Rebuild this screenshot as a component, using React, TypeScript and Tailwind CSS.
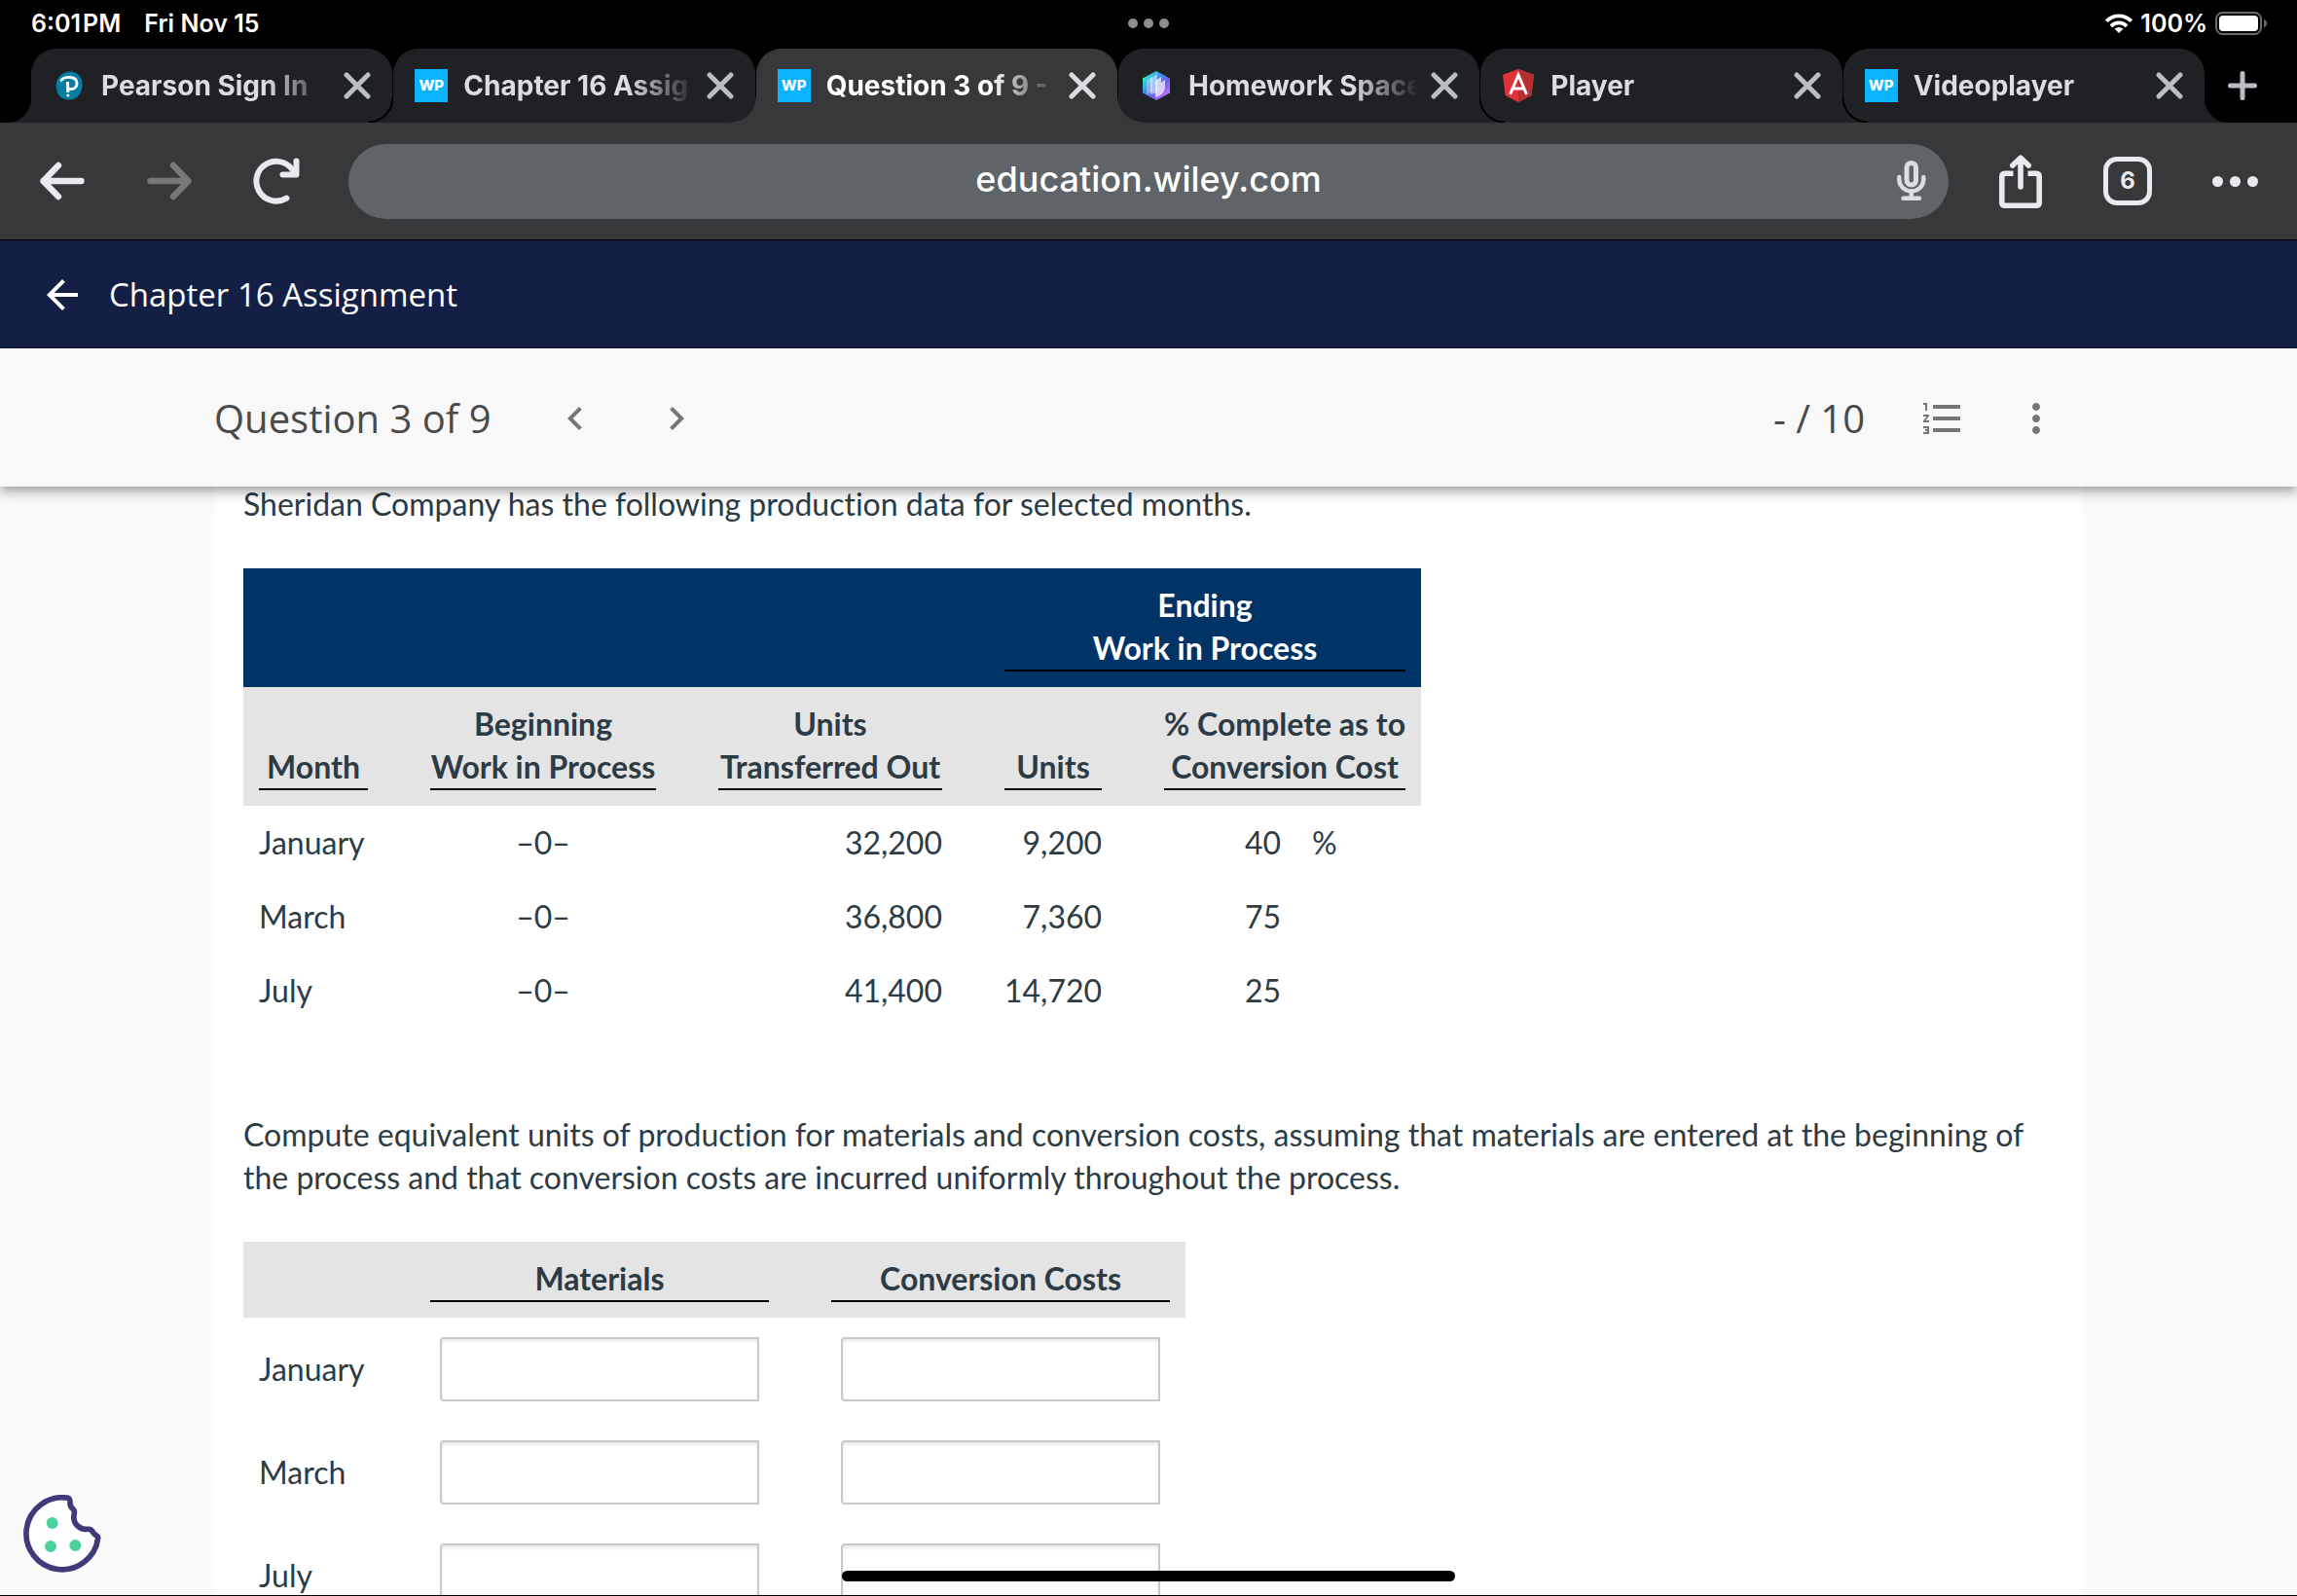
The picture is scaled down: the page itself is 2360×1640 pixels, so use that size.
import { useState } from "react";
import {
  MdArrowBack,
  MdChevronLeft,
  MdChevronRight,
  MdFormatListNumbered,
  MdMoreVert,
} from "react-icons/md";

type Favicon = "pearson" | "wp" | "homework" | "angular";

const tabs: { title: string; icon: Favicon; order: string }[] = [
  { title: "Pearson Sign In", icon: "pearson", order: "z-0" },
  { title: "Chapter 16 Assig", icon: "wp", order: "z-10" },
  { title: "Question 3 of 9 -", icon: "wp", order: "z-30" },
  { title: "Homework Space", icon: "homework", order: "z-20" },
  { title: "Player", icon: "angular", order: "z-10" },
  { title: "Videoplayer", icon: "wp", order: "z-0" },
];

const production = [
  { month: "January", beginning: "–0–", out: "32,200", units: "9,200", percent: "40", sign: "%" },
  { month: "March", beginning: "–0–", out: "36,800", units: "7,360", percent: "75", sign: "" },
  { month: "July", beginning: "–0–", out: "41,400", units: "14,720", percent: "25", sign: "" },
];

function TabIcon({ icon }: { icon: Favicon }) {
  if (icon === "wp") {
    return (
      <span className="size-[34px] shrink-0 bg-[#0ab3ff] text-white text-[15px] font-extrabold flex items-center justify-center">
        WP
      </span>
    );
  }
  if (icon === "pearson") {
    return (
      <svg className="size-[34px] shrink-0" viewBox="0 0 34 34" fill="none">
        <path
          d="M17.5 2.4C24 2 30 7 30.6 14.500C31 22 27.500 31 17.500 31.600C9 32 4 26 3.700 18C3.400 10 9 2.800 17.500 2.400Z"
          fill="#047fa3"
        />
        <path
          d="M9 11.500C12 7.500 25 6.500 25 14.500C25 19.500 21 21 17 20.500"
          stroke="#fff"
          strokeWidth="2.800"
          strokeLinecap="round"
        />
        <path d="M15.500 13L15.800 24" stroke="#fff" strokeWidth="3" />
        <circle cx="15.800" cy="27" r="1.500" fill="#fff" />
      </svg>
    );
  }
  if (icon === "homework") {
    return (
      <svg className="size-[34px] shrink-0" viewBox="0 0 34 34">
        <defs>
          <linearGradient id="hex" x1="0" y1="0" x2="1" y2="1">
            <stop offset="0.1" stopColor="#2df5c5" />
            <stop offset="0.4" stopColor="#3f8cf5" />
            <stop offset="0.65" stopColor="#7a5cf5" />
            <stop offset="1" stopColor="#e08cff" />
          </linearGradient>
        </defs>
        <path d="M17 2L31 9.500V24.500L17 32L3 24.500V9.500Z" fill="url(#hex)" />
        <path d="M7 12L13 7V23L7 26Z" fill="#fff" opacity="0.35" />
        <path d="M11 10L18 5V24L11 26Z" fill="#fff" opacity="0.5" />
        <path d="M16 12L22 8V14L26 11V19C26 24 21 28 16 29Z" fill="#fff" opacity="0.7" />
      </svg>
    );
  }
  return (
    <svg className="size-[34px] shrink-0" viewBox="0 0 34 34" fill="none">
      <path d="M17 0L33 5.700L30.500 27L17 34L3.500 27L1 5.700Z" fill="#e23237" />
      <path d="M17 0L33 5.700L30.500 27L17 34Z" fill="#b52e31" />
      <path d="M8.500 26L17 6L25.500 26M12 20H22" stroke="#fff" strokeWidth="3" />
    </svg>
  );
}

function Tab({ title, icon, order, active }: { title: string; icon: Favicon; order: string; active: boolean }) {
  return (
    <div
      className={`relative flex-1 min-w-0 h-full rounded-t-[26px] flex items-center px-[22px] ${order} ${
        active ? "bg-[#373839] text-white" : "bg-[#202124] text-[#dcdde1]"
      }`}
    >
      <span
        className={`absolute right-full bottom-0 size-[26px] ${
          active
            ? "bg-[radial-gradient(circle_at_0_0,transparent_25px,#373839_26px)]"
            : "bg-[radial-gradient(circle_at_0_0,transparent_24px,#000_25px,#000_26px,#202124_27px)]"
        }`}
      />
      <TabIcon icon={icon} />
      <span className="flex-1 min-w-0 ml-4 mr-2 overflow-hidden whitespace-nowrap text-[28px] leading-[38px] font-bold [mask-image:linear-gradient(to_right,#000_calc(100%-72px),transparent_calc(100%-4px))]">
        {title}
      </span>
      <button aria-label={`Close ${title}`} className={active ? "text-[#dcdde1]" : "text-[#b9bdc4]"}>
        <svg className="size-7" viewBox="-14 -14 28 28" stroke="currentColor" strokeWidth="5" strokeLinecap="round">
          <path d="M-11 -11L11 11M11 -11L-11 11" />
        </svg>
      </button>
      <span
        className={`absolute left-full bottom-0 size-[26px] ${
          active
            ? "bg-[radial-gradient(circle_at_100%_0,transparent_25px,#373839_26px)]"
            : "bg-[radial-gradient(circle_at_100%_0,transparent_24px,#000_25px,#000_26px,#202124_27px)]"
        }`}
      />
    </div>
  );
}

function StatusBar() {
  return (
    <div className="relative h-[50px] flex items-center justify-between pl-8 pr-[30px] pb-[2px] text-white text-[25px] leading-[30px] font-semibold">
      <div className="flex gap-6">
        <span>6:01{"\u200a"}PM</span>
        <span>Fri Nov 15</span>
      </div>
      <button aria-label="Multitasking" className="absolute inset-x-0 mx-auto w-[42px] flex gap-[6px]">
        <span className="size-[10px] rounded-full bg-[#8e8e8e]" />
        <span className="size-[10px] rounded-full bg-[#8e8e8e]" />
        <span className="size-[10px] rounded-full bg-[#8e8e8e]" />
      </button>
      <div className="flex items-center gap-2">
        <svg className="w-7 h-5" viewBox="0 0 28 20" fill="none" stroke="#fff" strokeWidth="3.800">
          <path d="M1.300 7.700A18 18 0 0 1 26.700 7.700" />
          <path d="M5.900 12.800A11.500 11.500 0 0 1 22.100 12.800" />
          <path d="M14 20L9.500 15.600Q14 12.200 18.500 15.600Z" fill="#fff" stroke="none" />
        </svg>
        <span>100%</span>
        <svg className="w-[54px] h-6" viewBox="0 0 54 24">
          <rect x="1" y="1" width="46" height="22" rx="6.500" fill="none" stroke="#6a6a6a" strokeWidth="2" />
          <rect x="4" y="4" width="40" height="16" rx="4" fill="#fff" />
          <path d="M50 8Q53 9 53 12Q53 15 50 16Z" fill="#6a6a6a" />
        </svg>
      </div>
    </div>
  );
}

function Toolbar() {
  return (
    <div className="h-[121px] shrink-0 bg-[#373839] border-b border-black flex items-center px-[9px] text-[#e8eaed]">
      <button aria-label="Back" className="w-[110px] flex justify-center">
        <svg className="size-12" viewBox="-24 -24 48 48" fill="none" stroke="currentColor" strokeWidth="6.400" strokeLinecap="round" strokeLinejoin="round">
          <path d="M19.500 0H-19.500M-4 -16L-19.500 0L-4 16" />
        </svg>
      </button>
      <button aria-label="Forward" className="w-[110px] flex justify-center text-[#77787a]">
        <svg className="size-12" viewBox="-24 -24 48 48" fill="none" stroke="currentColor" strokeWidth="6.400" strokeLinecap="round" strokeLinejoin="round">
          <path d="M-19.500 0H19.500M4 -16L19.500 0L4 16" />
        </svg>
      </button>
      <button aria-label="Reload" className="w-[110px] flex justify-center">
        <svg className="size-12" viewBox="-24 -24 48 48" fill="none" stroke="currentColor" strokeWidth="6" strokeLinecap="round" strokeLinejoin="round">
          <path d="M10.400 17.600A20.400 20.400 0 1 1 18.500 -8" />
          <path d="M20.500 -20.500V-6.500H6.500" />
        </svg>
      </button>
      <div className="relative flex-1 h-[77px] mx-[19px] rounded-full bg-[#5f6468] flex items-center">
        <input
          aria-label="Address"
          className="w-full h-full pb-1 text-center text-white text-[36px] font-medium outline-none rounded-full"
          defaultValue="education.wiley.com"
        />
        <button aria-label="Voice search" className="absolute right-[23px] text-[#dcdde1]">
          <svg className="w-[30px] h-[42px]" viewBox="0 0 30 42" fill="none" stroke="currentColor" strokeWidth="4.400" strokeLinecap="round">
            <rect x="10" y="2.500" width="9.500" height="22.600" rx="4.750" strokeWidth="5" />
            <path d="M2.300 17V19.500A12.500 12 0 0 0 27.300 19.500V17" />
            <path d="M14.800 32V38M6.500 38.800H23" />
          </svg>
        </button>
      </div>
      <button aria-label="Share" className="w-[110px] flex justify-center">
        <svg className="w-12 h-14" viewBox="0 -1 48 56" fill="none" stroke="currentColor" strokeWidth="5.600">
          <path d="M24 3.500V33M15.800 11L24 3.200L32.200 11" strokeLinecap="round" strokeLinejoin="round" />
          <path d="M16.500 19.300H8Q4.800 19.300 4.800 22.500V49Q4.800 52.200 8 52.200H40Q43.200 52.200 43.200 49V22.500Q43.200 19.300 40 19.300H31.500" />
        </svg>
      </button>
      <button aria-label="Open tabs" className="w-[110px] flex justify-center">
        <span className="size-[50px] rounded-[14px] border-5 border-[#e8eaed] flex items-center justify-center text-[24px] font-bold">
          6
        </span>
      </button>
      <button aria-label="More" className="w-[110px] flex justify-center gap-[7px]">
        <span className="size-[11px] rounded-full bg-[#e8eaed]" />
        <span className="size-[11px] rounded-full bg-[#e8eaed]" />
        <span className="size-[11px] rounded-full bg-[#e8eaed]" />
      </button>
    </div>
  );
}

function QuestionBar() {
  return (
    <div className="relative z-10 h-[142px] shrink-0 bg-[#f8f8f8] shadow-[0_4px_8px_-2px_rgba(0,0,0,0.2),0_8px_10px_0_rgba(0,0,0,0.14),0_2px_20px_0_rgba(0,0,0,0.12)]">
      <div className="h-full mx-[220px] pt-[2px] flex items-center justify-between font-['Open_Sans',sans-serif] text-[40px] leading-[56px] text-[#4a4a4a]">
        <div className="flex items-center">
          <h2>Question 3 of 9</h2>
          <button aria-label="Previous question" className="ml-[62px] text-[#757575]">
            <MdChevronLeft className="size-12" />
          </button>
          <button aria-label="Next question" className="ml-14 text-[#757575]">
            <MdChevronRight className="size-12" />
          </button>
        </div>
        <div className="flex items-center pr-6">
          <span>- / 10</span>
          <button aria-label="Question list" className="ml-14 text-[#757575]">
            <MdFormatListNumbered className="size-12" />
          </button>
          <button aria-label="More options" className="ml-12 text-[#757575]">
            <MdMoreVert className="size-12" />
          </button>
        </div>
      </div>
    </div>
  );
}

function ProductionTable() {
  return (
    <table className="mt-11 border-collapse">
      <thead>
        <tr className="bg-[#003366] text-white">
          <td colSpan={3} />
          <th colSpan={2} className="py-4 pl-16 pr-4">
            <div className="border-b-2 border-black">
              Ending
              <br />
              Work in Process
            </div>
          </th>
        </tr>
        <tr className="bg-[#e4e4e4] align-bottom">
          <th className="min-w-32 py-4 pl-4">
            <div className="border-b-2 border-black">Month</div>
          </th>
          <th className="min-w-[296px] py-4 pl-16">
            <div className="border-b-2 border-black">
              Beginning
              <br />
              Work in Process
            </div>
          </th>
          <th className="min-w-[294px] py-4 pl-16">
            <div className="border-b-2 border-black">
              Units
              <br />
              Transferred Out
            </div>
          </th>
          <th className="min-w-[164px] py-4 pl-16">
            <div className="border-b-2 border-black">Units</div>
          </th>
          <th className="min-w-[325px] py-4 pl-16 pr-4">
            <div className="border-b-2 border-black">
              % Complete as to
              <br />
              Conversion Cost
            </div>
          </th>
        </tr>
      </thead>
      <tbody>
        {production.map((row) => (
          <tr key={row.month}>
            <td className="py-4 pl-4">{row.month}</td>
            <td className="py-4 pl-16 text-center">{row.beginning}</td>
            <td className="py-4 pl-16 text-right">{row.out}</td>
            <td className="py-4 pl-16 text-right">{row.units}</td>
            <td className="py-4 pl-16 pr-4">
              <div className="grid grid-cols-[120px_auto] gap-8">
                <span className="text-right">{row.percent}</span>
                <span>{row.sign}</span>
              </div>
            </td>
          </tr>
        ))}
      </tbody>
    </table>
  );
}

function AnswerTable() {
  const [answers, setAnswers] = useState<Record<string, string>>({});

  const field = (month: string, column: string) => {
    const key = `${month} ${column}`;
    return (
      <input
        aria-label={key}
        className="block mx-[10px] w-[328px] h-[66px] px-3 text-right bg-white border-2 border-[#c8c8c8] rounded-l-[4px] shadow-[inset_0_3px_3px_rgba(0,0,0,0.08)] outline-none"
        value={answers[key] ?? ""}
        onChange={(e) => setAnswers({ ...answers, [key]: e.target.value })}
      />
    );
  };

  return (
    <table className="mt-11 border-collapse">
      <thead>
        <tr className="bg-[#e4e4e4]">
          <td className="min-w-32" />
          <th className="py-4 pl-16">
            <div className="border-b-2 border-black">Materials</div>
          </th>
          <th className="py-4 pl-16 pr-4">
            <div className="border-b-2 border-black">Conversion Costs</div>
          </th>
        </tr>
      </thead>
      <tbody>
        {production.map(({ month }) => (
          <tr key={month}>
            <td className="py-5 pl-4">{month}</td>
            <td className="py-5 pl-16">{field(month, "Materials")}</td>
            <td className="py-5 pl-16 pr-4">{field(month, "Conversion Costs")}</td>
          </tr>
        ))}
      </tbody>
    </table>
  );
}

function CookieButton() {
  return (
    <button aria-label="Cookie settings" className="absolute left-6 bottom-[23px] z-20">
      <svg className="block size-20" viewBox="0 0 240 240">
        <path
          d="M136 9.500A111 111 0 1 0 230 133Q231 129 226 126Q219 123 215 116Q209 104 197 106Q180 108 166 95Q153 82 156 64Q159 48 154 45Q143 36 144 24Q144 9 136 9.500Z"
          fill="#fff"
          stroke="#3f3a7a"
          strokeWidth="17"
          strokeLinejoin="round"
        />
        <circle cx="89" cy="87" r="18" fill="#4bd29b" />
        <circle cx="84" cy="159" r="18" fill="#4bd29b" />
        <circle cx="160" cy="156" r="18" fill="#4bd29b" />
      </svg>
    </button>
  );
}

export default function App() {
  return (
    <div className="relative h-screen flex flex-col overflow-hidden bg-[#fafafa] border-b border-black">
      <div className="shrink-0 bg-black font-[Inter,sans-serif]">
        <StatusBar />
        <div className="h-[76px] flex pl-8">
          <div className="isolate flex-1 min-w-0 flex gap-px">
            {tabs.map((tab, i) => (
              <Tab key={tab.title} {...tab} active={i === 2} />
            ))}
          </div>
          <button aria-label="New tab" className="w-[95px] pl-6 text-[#b9bdc4]">
            <svg className="size-[30px]" viewBox="-15 -15 30 30" stroke="currentColor" strokeWidth="5" strokeLinecap="round">
              <path d="M-12.500 0H12.500M0 -12.500V12.500" />
            </svg>
          </button>
        </div>
      </div>
      <div className="shrink-0 font-[Inter,sans-serif]">
        <Toolbar />
      </div>
      <header className="h-[111px] shrink-0 bg-[#141f45] text-white flex items-center pl-10 font-['Open_Sans',sans-serif]">
        <a href="#" className="flex items-center gap-6 text-[33px] leading-[44px] font-medium">
          <MdArrowBack className="size-12" />
          Chapter 16 Assignment
        </a>
      </header>
      <QuestionBar />
      <main className="flex-1 min-h-0 mx-[220px] bg-white px-[30px] font-[Lato,sans-serif] text-[32px] leading-[44px] text-[#2d3b45] [font-variant-ligatures:no-common-ligatures]">
        <p className="-mt-1">Sheridan Company has the following production data for selected months.</p>
        <ProductionTable />
        <p className="mt-[88px]">
          Compute equivalent units of production for materials and conversion costs, assuming that materials are
          entered at the beginning of the process and that conversion costs are incurred uniformly throughout the
          process.
        </p>
        <AnswerTable />
      </main>
      <CookieButton />
      <div className="absolute inset-x-0 bottom-[14px] z-20 mx-auto w-[630px] h-[11px] rounded-full bg-black" />
    </div>
  );
}
